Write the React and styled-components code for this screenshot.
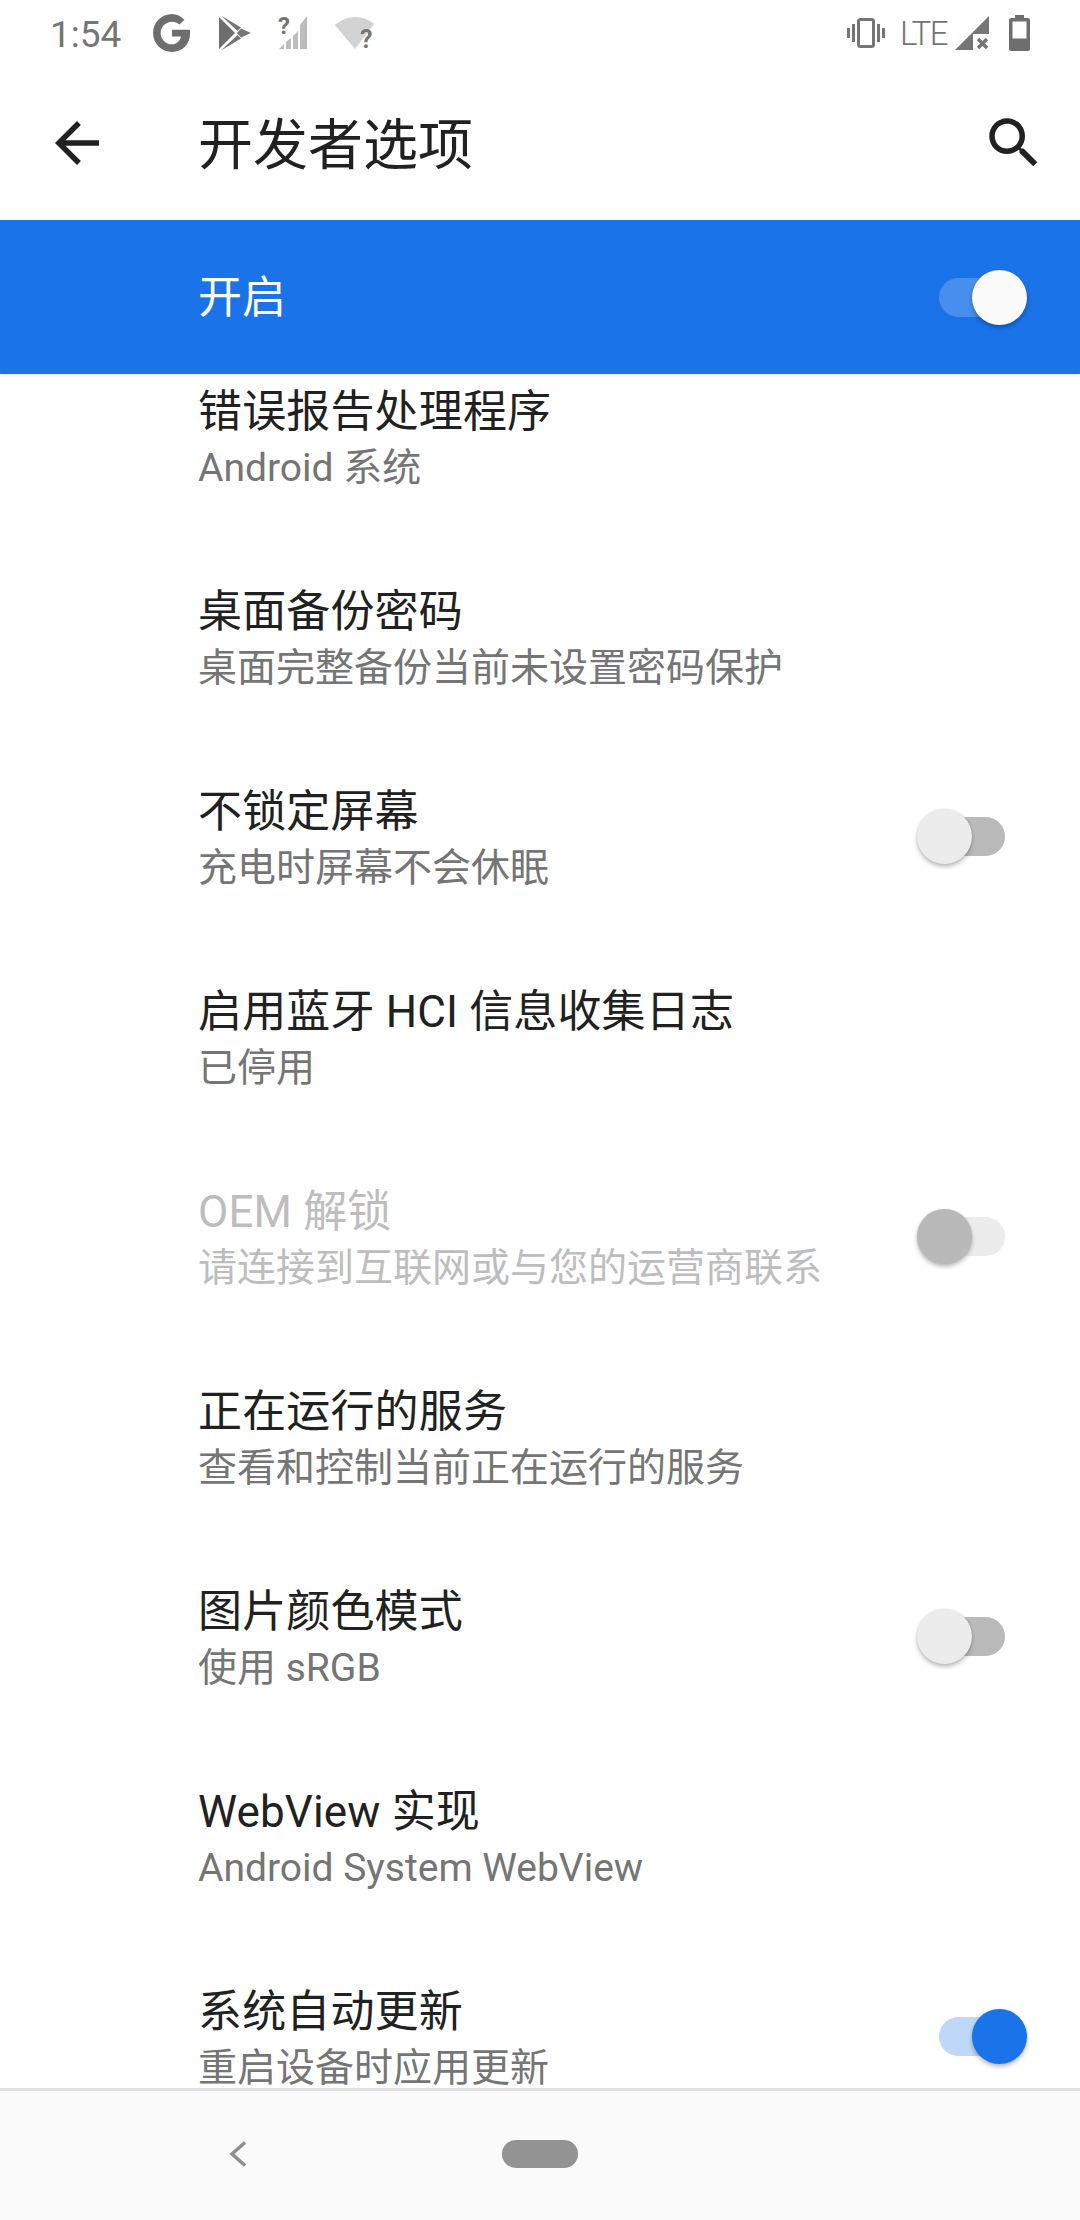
import React from 'react';
import styled, { createGlobalStyle } from 'styled-components';

const rows = [
  { title: '错误报告处理程序', sub: 'Android 系统' },
  { title: '桌面备份密码', sub: '桌面完整备份当前未设置密码保护' },
  { title: '不锁定屏幕', sub: '充电时屏幕不会休眠', toggle: 'off' },
  { title: '启用蓝牙 HCI 信息收集日志', sub: '已停用' },
  { title: 'OEM 解锁', sub: '请连接到互联网或与您的运营商联系', toggle: 'disabled', disabled: true },
  { title: '正在运行的服务', sub: '查看和控制当前正在运行的服务' },
  { title: '图片颜色模式', sub: '使用 sRGB', toggle: 'off' },
  { title: 'WebView 实现', sub: 'Android System WebView' },
  { title: '系统自动更新', sub: '重启设备时应用更新', toggle: 'on' },
];

function App() {
  return (
    <Screen>
      <GlobalStyle />
      <StatusBar>
        <StatusLeft>
          <Time>1:54</Time>
          <GoogleIcon />
          <PlayIcon />
          <NoSignalIcon />
          <NoWifiIcon />
        </StatusLeft>
        <StatusRight>
          <VibrateIcon />
          <Lte>LTE</Lte>
          <SignalXIcon />
          <BatteryIcon />
        </StatusRight>
      </StatusBar>

      <Toolbar>
        <ToolIcon viewBox="0 0 24 24">
          <path d="M20 11H7.83l5.59-5.59L12 4l-8 8 8 8 1.41-1.41L7.83 13H20v-2z" />
        </ToolIcon>
        <PageTitle>开发者选项</PageTitle>
        <ToolIcon viewBox="0 0 24 24">
          <path d="M15.5 14h-.79l-.28-.27C15.41 12.59 16 11.11 16 9.5 16 5.91 13.09 3 9.5 3S3 5.91 3 9.5 5.91 16 9.5 16c1.61 0 3.09-.59 4.23-1.57l.27.28v.79l5 4.99L20.49 19l-4.99-5zm-6 0C7.01 14 5 11.99 5 9.5S7.01 5 9.5 5 14 7.01 14 9.5 11.99 14 9.5 14z" />
        </ToolIcon>
      </Toolbar>

      <MasterBar>
        <MasterLabel>开启</MasterLabel>
        <Toggle kind="master" />
      </MasterBar>

      <ListViewport>
        <ScrolledList>
          {rows.map((row) => (
            <Row key={row.title}>
              <RowText>
                <RowTitle disabled={row.disabled}>{row.title}</RowTitle>
                <RowSub disabled={row.disabled}>{row.sub}</RowSub>
              </RowText>
              {row.toggle && <Toggle kind={row.toggle} />}
            </Row>
          ))}
        </ScrolledList>
      </ListViewport>

      <NavBar>
        <NavBack viewBox="0 0 18 26">
          <path d="M16 1.5 L3 13 L16 24.5" />
        </NavBack>
        <NavHome />
      </NavBar>
    </Screen>
  );
}

function Toggle({ kind }) {
  return (
    <ToggleWrap>
      <Track kind={kind} />
      <Thumb kind={kind} />
    </ToggleWrap>
  );
}

function GoogleIcon() {
  return (
    <svg width="40" height="40" viewBox="0 0 38 38">
      <path
        d="M33 16H19v6.4h8.6C26.6 26.6 23.2 29.8 19 29.8 13 29.8 8.2 25 8.2 19S13 8.2 19 8.2c2.8 0 5.2 1 7.2 2.8l4.6-4.6C27.6 3.2 23.6 1 19 1 9 1 1 9 1 19s8 18 18 18c9.8 0 17.2-7 17.2-18 0-1-.1-2-.3-3z"
        fill="#6e6e6e"
      />
    </svg>
  );
}

function PlayIcon() {
  return (
    <svg width="32" height="36" viewBox="0 0 32 36">
      <polygon points="0,2 0,34 16,18" fill="#6e6e6e" />
      <polygon points="2,0.5 22,12.5 18.5,16" fill="#757575" />
      <polygon points="2,35.5 22,23.5 18.5,20" fill="#757575" />
      <polygon points="22,13.5 32,18 22,22.5 18,18" fill="#757575" />
    </svg>
  );
}

function NoSignalIcon() {
  return (
    <StatusGlyph width="30" height="44" viewBox="0 -4 30 44">
      <path d="M1 34h5v-5zM8 34h5V23l-5 4zM15 34h5V16l-5 5zM22 34h7V1l-7 9z" fill="#bdbdbd" />
      <text x="0" y="19" fontFamily="Roboto" fontWeight="700" fontSize="24" fill="#757575">?</text>
    </StatusGlyph>
  );
}

function NoWifiIcon() {
  return (
    <StatusGlyph width="40" height="44" viewBox="0 -4 40 44">
      <path d="M0 10C6 5 12 2 20 2s14 3 19 7L20 34z" fill="#d2d2d2" />
      <text x="25" y="33" fontFamily="Roboto" fontWeight="700" fontSize="25" fill="#757575" stroke="#fff" strokeWidth="0.6" paintOrder="stroke">?</text>
    </StatusGlyph>
  );
}

function VibrateIcon() {
  return (
    <svg width="38" height="30" viewBox="0 0 38 30" fill="none">
      <rect x="11.5" y="1.5" width="15" height="27" rx="2" stroke="#757575" strokeWidth="3" />
      <rect x="5" y="6" width="3" height="18" fill="#757575" />
      <rect x="30" y="6" width="3" height="18" fill="#757575" />
      <rect x="0" y="10" width="3" height="10" fill="#757575" />
      <rect x="35" y="10" width="3" height="10" fill="#757575" />
    </svg>
  );
}

function SignalXIcon() {
  return (
    <svg width="34" height="34" viewBox="0 0 34 34">
      <path d="M0 34L34 0v18H18v16z" fill="#757575" />
      <path d="M23 23l9 9M32 23l-9 9" stroke="#757575" strokeWidth="3.4" fill="none" />
    </svg>
  );
}

function BatteryIcon() {
  return (
    <svg width="21" height="36" viewBox="0 0 21 36">
      <path d="M6 0h9v3h4a2 2 0 0 1 2 2v29a2 2 0 0 1-2 2H2a2 2 0 0 1-2-2V5a2 2 0 0 1 2-2h4z" fill="#6e6e6e" />
      <rect x="3.5" y="6.5" width="14" height="17" fill="#fff" />
    </svg>
  );
}

export default App;

const GlobalStyle = createGlobalStyle`
  html, body {
    margin: 0;
    padding: 0;
    background: #fff;
  }
  body {
    font-family: Roboto, "Noto Sans CJK SC", sans-serif;
  }
`;

const Screen = styled.div`
  width: 1080px;
  height: 2220px;
  display: flex;
  flex-direction: column;
  overflow: hidden;
  background: #fff;
`;

const StatusBar = styled.div`
  height: 66px;
  display: flex;
  align-items: center;
  justify-content: space-between;
  padding: 0 50px;
  box-sizing: border-box;
`;

const StatusLeft = styled.div`
  display: flex;
  align-items: center;
  gap: 27px;
`;

const StatusRight = styled.div`
  display: flex;
  align-items: center;
  gap: 20px;
`;

const StatusGlyph = styled.svg`
  flex: none;
  display: block;
`;

const Time = styled.span`
  font-size: 37px;
  color: #757575;
  padding-top: 3px;
  margin-right: 4px;
`;

const Lte = styled.span`
  font-size: 33px;
  font-weight: 300;
  letter-spacing: -1.5px;
  color: #757575;
  margin: 0 -12px 0 -5px;
`;

const Toolbar = styled.div`
  height: 154px;
  display: flex;
  align-items: center;
  padding: 0 33px 0 44px;
`;

const ToolIcon = styled.svg`
  width: 66px;
  height: 66px;
  fill: #212121;
  flex: none;
`;

const PageTitle = styled.h1`
  flex: 1;
  margin: 0 0 6px 88px;
  font-size: 55px;
  font-weight: 400;
  color: #212121;
`;

const MasterBar = styled.div`
  height: 154px;
  display: flex;
  align-items: center;
  justify-content: space-between;
  padding: 0 53px 0 198px;
  background: #1a73e8;
  flex: none;
  position: relative;
  z-index: 1;
  box-shadow: 0 1px 3px rgba(0, 0, 0, 0.12);
`;

const MasterLabel = styled.span`
  font-size: 44px;
  color: #fff;
  padding-bottom: 6px;
`;

const ListViewport = styled.div`
  flex: 1;
  min-height: 0;
  overflow: hidden;
`;

const ScrolledList = styled.div`
  margin-top: -38px;
`;

const Row = styled.div`
  height: 200px;
  display: flex;
  align-items: center;
  justify-content: space-between;
  padding: 0 53px 0 198px;
`;

const RowText = styled.div`
  display: flex;
  flex-direction: column;
  padding-top: 6px;
`;

const RowTitle = styled.div`
  font-size: 44px;
  line-height: 58px;
  letter-spacing: 0.15px;
  color: ${({ disabled }) => (disabled ? '#bdbdbd' : '#212121')};
`;

const RowSub = styled.div`
  font-size: 39px;
  line-height: 54px;
  color: ${({ disabled }) => (disabled ? '#bdbdbd' : '#757575')};
`;

const ToggleWrap = styled.div`
  position: relative;
  width: 110px;
  height: 55px;
  flex: none;
`;

const trackColors = {
  master: 'rgba(255, 255, 255, 0.2)',
  off: '#bababa',
  disabled: '#ececec',
  on: '#bfd7f9',
};

const thumbColors = {
  master: '#fafafa',
  off: '#ececec',
  disabled: '#b9b9b9',
  on: '#1a73e8',
};

const Track = styled.div`
  position: absolute;
  top: 8px;
  left: 22px;
  width: 66px;
  height: 39px;
  border-radius: 20px;
  background: ${({ kind }) => trackColors[kind]};
`;

const Thumb = styled.div`
  position: absolute;
  top: 0;
  left: ${({ kind }) => (kind === 'on' || kind === 'master' ? '55px' : '0')};
  width: 55px;
  height: 55px;
  border-radius: 50%;
  background: ${({ kind }) => thumbColors[kind]};
  box-shadow: 0 3px 4px rgba(0, 0, 0, 0.25), 0 0 2px rgba(0, 0, 0, 0.1);
`;

const NavBar = styled.div`
  height: 132px;
  flex: none;
  box-sizing: border-box;
  border-top: 3px solid #e0e0e0;
  background: #fafafa;
  display: flex;
  align-items: center;
  padding: 0 0 3px 229px;
`;

const NavBack = styled.svg`
  width: 18px;
  height: 26px;
  fill: none;
  stroke: #8e8e8e;
  stroke-width: 3.5;
`;

const NavHome = styled.div`
  width: 76px;
  height: 28px;
  border-radius: 14px;
  background: #939393;
  margin-left: 255px;
`;
